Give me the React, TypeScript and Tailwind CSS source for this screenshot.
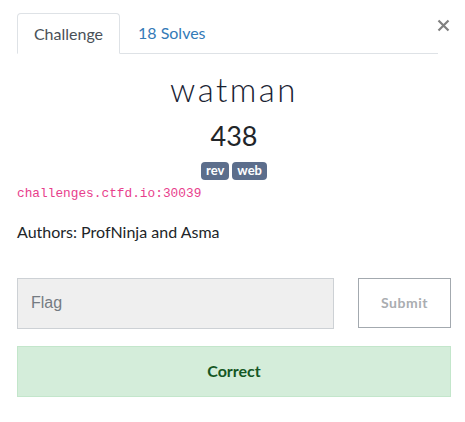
export default function App() {
  return (
    <div className="relative h-[422px] w-[465px] bg-white pl-[17px] pr-[14px] pt-[13px] font-['Lato',sans-serif] text-[#212529]">
      <button className="absolute left-[437px] top-[19px] h-[13px] w-[13px] text-[#777]" aria-label="Close">
        <svg viewBox="0 0 13 13" width="13" height="13">
          <path d="M1.5 1.5 L11.5 11.5 M11.5 1.5 L1.5 11.5" stroke="#808080" strokeWidth="2.2" />
        </svg>
      </button>

      <div className="mr-[13px] flex h-[41px] border-b border-[#dee2e6]">
        <div className="-mb-px flex w-[103px] items-center justify-center rounded-t-[4px] border border-b-white border-[#dee2e6] bg-white text-[16px] text-[#495057]">
          Challenge
        </div>
        <div className="flex items-center pl-[18px] text-[16px] text-[#337ab7]">18 Solves</div>
      </div>

      <h1 className="mt-[16px] text-center text-[33px] font-light leading-[1.2] tracking-[2.5px] text-[#1a2333]">
        watman
      </h1>
      <h2 className="mt-[10px] text-center text-[27px] leading-[1.2] text-[#212529]">438</h2>

      <div className="mt-[10px] flex justify-center gap-[3px]">
        <span className="flex h-[18px] items-center rounded-[4px] bg-[#5c6e8c] px-[5px] text-[13px] font-bold text-white">
          rev
        </span>
        <span className="flex h-[18px] items-center rounded-[4px] bg-[#5c6e8c] px-[5px] text-[13px] font-bold text-white">
          web
        </span>
      </div>

      <div className="mt-[4px] font-['Liberation_Mono',monospace] text-[12.8px] leading-[20px] text-[#e83e8c]">
        challenges.ctfd.io:30039
      </div>

      <p className="mt-[16px] text-[16px] leading-[24px]">Authors: ProfNinja and Asma</p>

      <div className="mt-[34px] flex items-start justify-between">
        <input
          type="text"
          placeholder="Flag"
          className="h-[51px] w-[317px] border border-[#cdd1d5] bg-[#efefef] px-[13px] font-['Liberation_Sans',sans-serif] text-[16px] outline-none placeholder:text-[#747b82]"
        />
        <button className="h-[50px] w-[93px] border border-[#a3a9af] bg-white text-[14px] font-bold tracking-[0.5px] text-[#aaadb1]">
          Submit
        </button>
      </div>

      <div className="mt-[17px] flex h-[51px] items-center justify-center border border-[#c3e6cb] bg-[#d4edda] text-[16px] font-bold text-[#155724]">
        Correct
      </div>
    </div>
  );
}
